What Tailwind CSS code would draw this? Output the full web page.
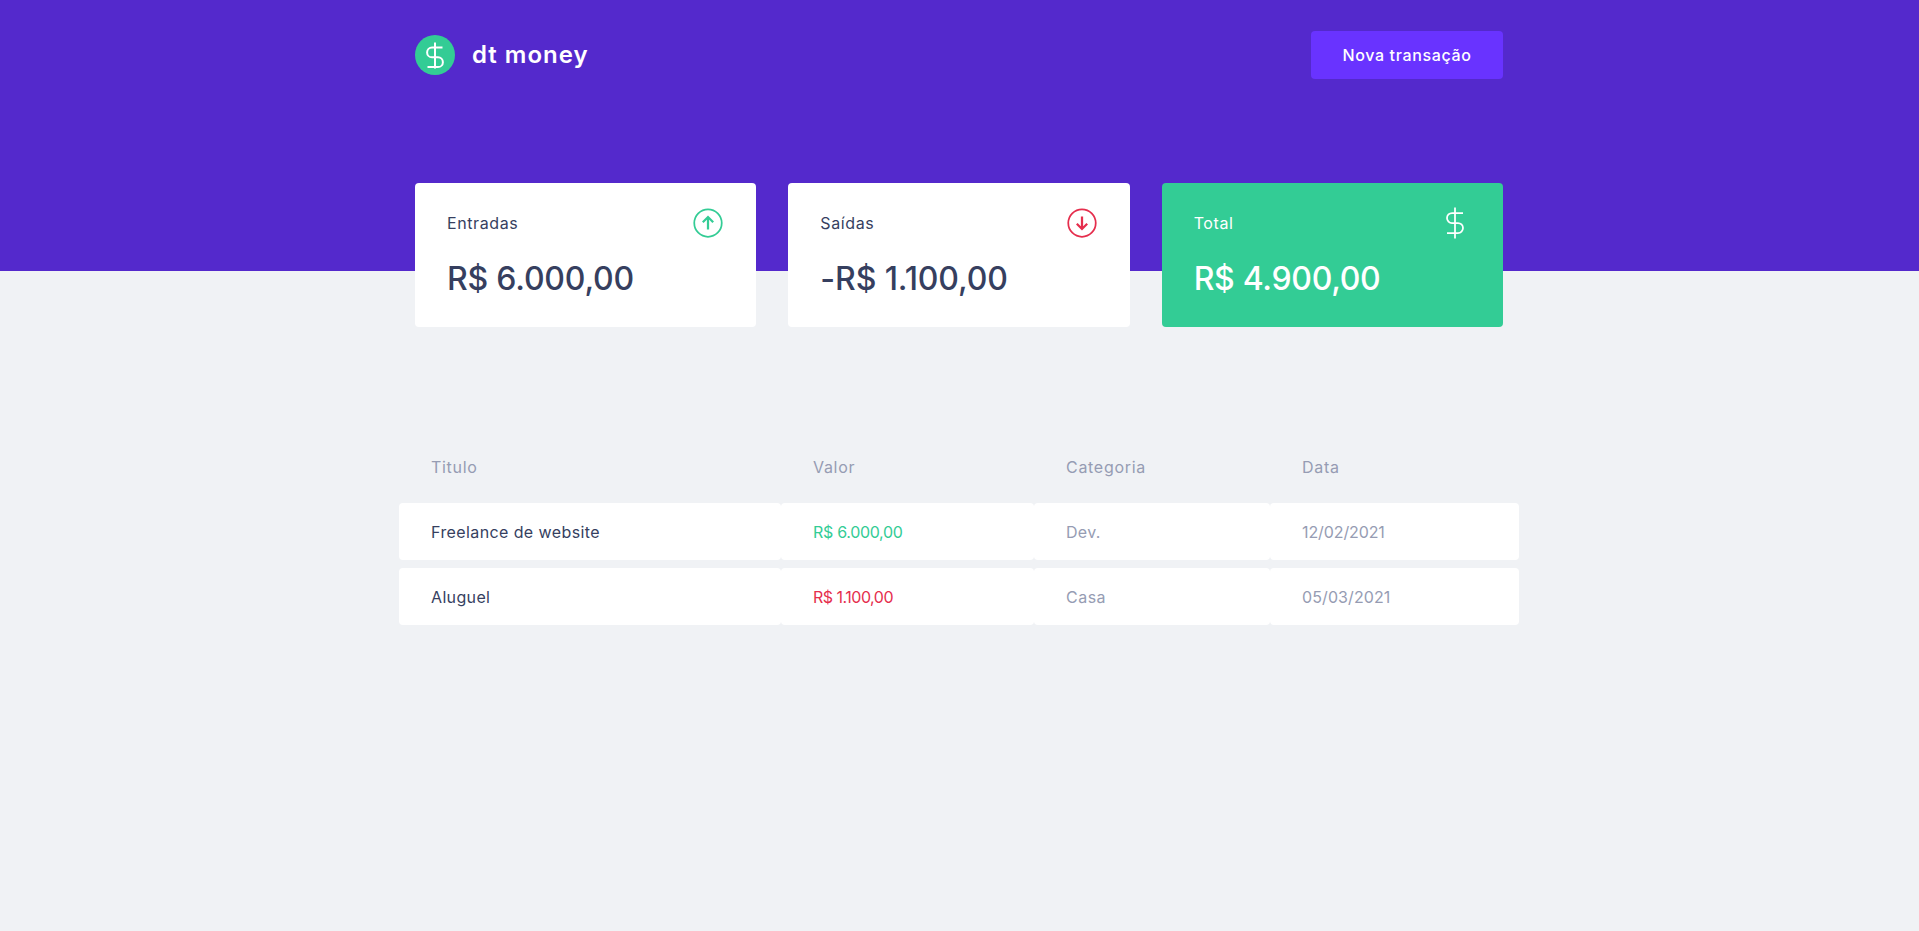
<!DOCTYPE html>
<html lang="pt-BR">
<head>
    <meta charset="UTF-8">
    <meta name="viewport" content="width=device-width, initial-scale=1.0">
    <title>dt money</title>
    <script src="https://cdn.jsdelivr.net/npm/@tailwindcss/browser@4"></script>
</head>
<body class="bg-[#f0f2f5] text-[#363f5f] [font-family:Inter,sans-serif] min-h-screen">

    <header class="bg-[#5429cc] h-[271px] pt-[31px]">
        <div class="w-[1120px] ml-[399px] px-4 flex items-center justify-between">
            <div class="flex items-center gap-[17px]">
                <svg class="w-10 h-10" viewBox="0 0 40 40" fill="none">
                    <circle cx="20" cy="20" r="20" fill="#33cc95"/>
                    <path d="M20 7.500V33.500M27.500 12.500H17a4.900 4.900 0 0 0 0 9.800h6a4.900 4.900 0 0 1 0 9.800H12.500" stroke="#fff" stroke-width="2"/>
                </svg>
                <span class="text-white text-2xl font-semibold tracking-[1px]">dt money</span>
            </div>
            <button class="w-[192px] h-12 bg-[#6933ff] text-white rounded text-base font-medium tracking-[0.65px]">Nova transação</button>
        </div>
    </header>

    <main class="w-[1120px] ml-[399px]">
        <section class="grid grid-cols-3 gap-8 px-4 -mt-[88px]">
            <div class="bg-white rounded px-8 py-6">
                <div class="flex items-center justify-between">
                    <span class="text-base tracking-[0.6px]">Entradas</span>
                    <svg class="w-8 h-8" viewBox="0 0 32 32" fill="none" stroke="#33cc95">
                        <circle cx="16" cy="16" r="13.750" stroke-width="1.750"/>
                        <path d="M16 22.500V10M10.800 15.200L16 10l5.200 5.200" stroke-width="2.250"/>
                    </svg>
                </div>
                <div class="mt-4 text-[32px] leading-12 font-medium tracking-[-0.2px]">R$ 6.000,00</div>
            </div>
            <div class="bg-white rounded px-8 py-6">
                <div class="flex items-center justify-between">
                    <span class="text-base tracking-[0.6px]">Saídas</span>
                    <svg class="w-8 h-8" viewBox="0 0 32 32" fill="none" stroke="#e52e4d">
                        <circle cx="16" cy="16" r="13.750" stroke-width="1.750"/>
                        <path d="M16 9.500V22M10.800 16.800L16 22l5.200-5.200" stroke-width="2.250"/>
                    </svg>
                </div>
                <div class="mt-4 text-[32px] leading-12 font-medium tracking-[-0.1px]">-R$ 1.100,00</div>
            </div>
            <div class="bg-[#33cc95] text-white rounded px-8 py-6">
                <div class="flex items-center justify-between">
                    <span class="text-base tracking-[0.6px]">Total</span>
                    <svg class="w-8 h-8" viewBox="0 0 32 32" fill="none" stroke="#fff" stroke-width="1.750">
                        <path d="M16 0.500V31.500M24 6H13a5 5 0 0 0 0 10h6a5 5 0 0 1 0 10H8"/>
                    </svg>
                </div>
                <div class="mt-4 text-[32px] leading-12 font-medium tracking-[-0.3px]">R$ 4.900,00</div>
            </div>
        </section>

        <section class="mt-[104px]">
            <table class="w-full table-fixed border-separate border-spacing-x-0 border-spacing-y-2">
                <thead>
                    <tr class="text-[#969cb3] text-base text-left tracking-[0.7px]">
                        <th class="w-[382px] font-normal px-8 py-4 leading-6">Titulo</th>
                        <th class="w-[253px] font-normal px-8 py-4 leading-6">Valor</th>
                        <th class="w-[236px] font-normal px-8 py-4 leading-6">Categoria</th>
                        <th class="font-normal px-8 py-4 leading-6">Data</th>
                    </tr>
                </thead>
                <tbody class="text-base">
                    <tr>
                        <td class="bg-white rounded px-8 py-4 h-[57px] tracking-[0.4px]">Freelance de website</td>
                        <td class="bg-white rounded px-8 py-4 h-[57px] text-[#33cc95] tracking-[-0.3px]">R$ 6.000,00</td>
                        <td class="bg-white rounded px-8 py-4 h-[57px] text-[#969cb3] tracking-[0.3px]">Dev.</td>
                        <td class="bg-white rounded px-8 py-4 h-[57px] text-[#969cb3] tracking-[-0.1px]">12/02/2021</td>
                    </tr>
                    <tr>
                        <td class="bg-white rounded px-8 py-4 h-[57px] tracking-[0.35px]">Aluguel</td>
                        <td class="bg-white rounded px-8 py-4 h-[57px] text-[#e52e4d] tracking-[-0.5px]">R$ 1.100,00</td>
                        <td class="bg-white rounded px-8 py-4 h-[57px] text-[#969cb3] tracking-[0.5px]">Casa</td>
                        <td class="bg-white rounded px-8 py-4 h-[57px] text-[#969cb3] tracking-[0.1px]">05/03/2021</td>
                    </tr>
                </tbody>
            </table>
        </section>
    </main>

</body>
</html>
